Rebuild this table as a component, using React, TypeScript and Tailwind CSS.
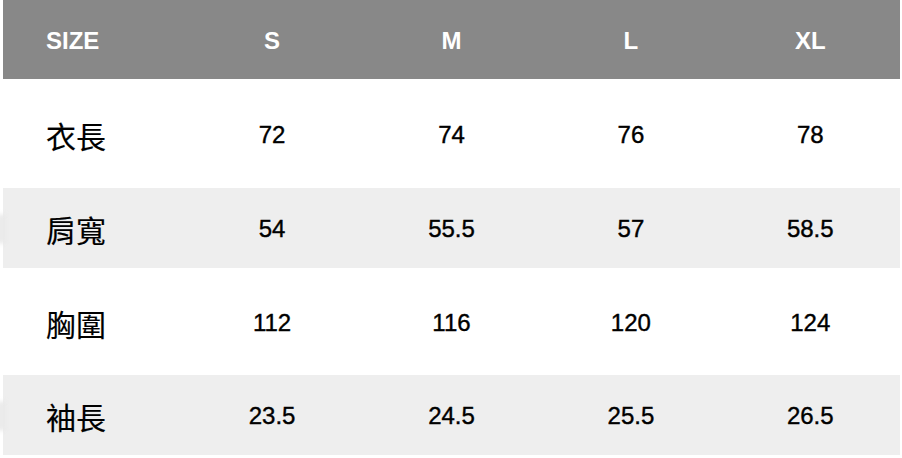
const sizes = ["S", "M", "L", "XL"]

const rows = [
  { label: "衣長", values: ["72", "74", "76", "78"], shaded: false, height: "h-[109px]" },
  { label: "肩寬", values: ["54", "55.5", "57", "58.5"], shaded: true, height: "h-[80px]" },
  { label: "胸圍", values: ["112", "116", "120", "124"], shaded: false, height: "h-[107px]" },
  { label: "袖長", values: ["23.5", "24.5", "25.5", "26.5"], shaded: true, height: "h-[80px]" },
]

export default function App() {
  return (
    <div className="w-[902px] h-[458px] bg-white overflow-hidden font-['Liberation_Sans','Noto_Sans_CJK_TC',sans-serif]">
      <div className="relative pl-[3px] pr-[2px]">
        {/* header */}
        <div className="grid grid-cols-5 h-[79px] bg-[#888888] text-white font-bold text-[24px] items-center pt-[3px]">
          <div className="pl-[43px]">SIZE</div>
          {sizes.map((s) => (
            <div key={s} className="text-center">
              {s}
            </div>
          ))}
        </div>

        {rows.map((row) => (
          <div
            key={row.label}
            className={`relative grid grid-cols-5 items-center text-black pt-[2px] ${row.height} ${row.shaded ? "bg-[#eeeeee]" : "bg-white"}`}
          >
            {row.shaded && (
              <div className="absolute left-[-5px] top-[26px] w-[7px] h-[30px] rounded-full bg-[#e8e8e8] blur-[2px]" />
            )}
            <div className="pl-[43px] text-[30px] leading-none font-['Noto_Sans_CJK_TC',sans-serif] [-webkit-text-stroke:0.15px_black]">
              {row.label}
            </div>
            {row.values.map((v, i) => (
              <div key={i} className="text-center text-[24px] leading-none [-webkit-text-stroke:0.4px_black]">
                {v}
              </div>
            ))}
          </div>
        ))}
      </div>
    </div>
  )
}
